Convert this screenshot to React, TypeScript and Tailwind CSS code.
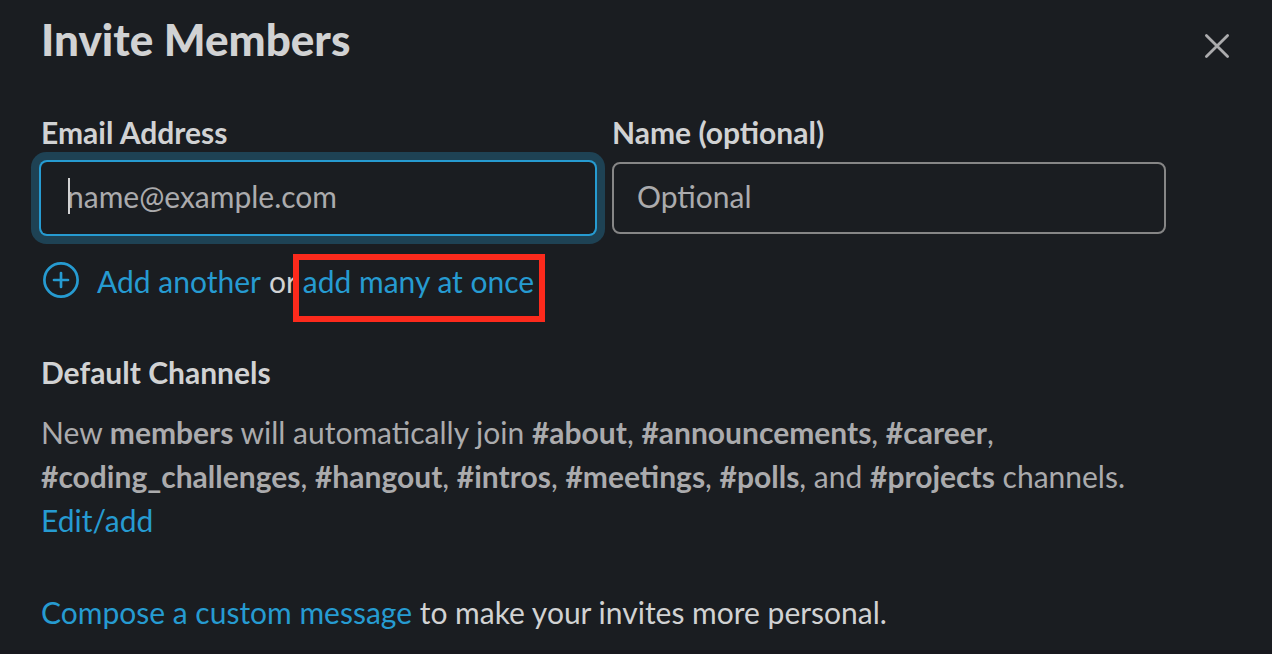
const channels = ["#about", "#announcements", "#career", "#coding_challenges", "#hangout", "#intros", "#meetings", "#polls"];

export default function App() {
  return (
    <main className="min-h-screen border-b-4 border-[#17181d] bg-[#1a1d21] px-[41px] font-['Lato',sans-serif] text-[30px] leading-[44px] text-[#d1d2d3]">
      <header className="flex items-start justify-between pt-[11px]">
        <h1 className="text-[44px] leading-[56px] font-black">Invite Members</h1>
        <button type="button" aria-label="Close" className="mt-[21px] text-[#ababad]">
          <svg className="size-7" viewBox="0 0 28 28" fill="none" stroke="currentColor" strokeWidth="2.8" strokeLinecap="round">
            <path d="M3.4 3.4 24.6 24.6M24.6 3.4 3.4 24.6" />
          </svg>
        </button>
      </header>

      <form className="mt-[45px] mr-[65px] grid grid-cols-2 gap-x-[17px]">
        <div>
          <label htmlFor="email" className="block leading-10 font-bold">Email Address</label>
          <div className="relative mt-[10px]">
            <input
              id="email"
              type="email"
              placeholder="name@example.com"
              className="block h-[72px] w-full rounded-md bg-transparent px-[26px] pb-1 shadow-[0_0_0_2px_#269bd1,0_0_0_10px_#1e4254] outline-none placeholder:text-[#ababad]"
            />
            <span aria-hidden="true" className="absolute top-4 left-[27px] h-9 w-0.5 bg-[#d1d2d3]" />
          </div>
        </div>
        <div>
          <label htmlFor="name" className="block leading-10 font-bold">Name (optional)</label>
          <input
            id="name"
            type="text"
            placeholder="Optional"
            className="mt-[10px] block h-[72px] w-full rounded-lg border-2 border-[#868686] bg-transparent px-[23px] pb-1 outline-none placeholder:text-[#ababad]"
          />
        </div>
      </form>

      <div className="mt-5 ml-0.5 flex items-start leading-[42px]">
        <button type="button" className="mt-1.5 flex items-start gap-[18px] text-[#269bd1]">
          <svg className="mt-0.5 size-9" viewBox="0 0 36 36" fill="none" stroke="currentColor" strokeWidth="2.7" strokeLinecap="round">
            <circle cx="18" cy="18" r="16.6" />
            <path d="M18 11v14M11 18h14" />
          </svg>
          Add another
        </button>
        <span className="mt-1.5 ml-2">or</span>
        <button type="button" className="-ml-1 border-[6px] border-[#fc2a1c] pr-[5px] pb-[14px] pl-1 text-[#269bd1]">add many at once</button>
      </div>

      <section className="mt-[30px]">
        <h2 className="leading-10 font-bold">Default Channels</h2>
        <p className="mt-[18px] text-[#ababad]">
          New <b>members</b> will automatically join{" "}
          {channels.map((channel) => (
            <span key={channel}><b>{channel}</b>, </span>
          ))}
          and <b>#projects</b> channels.
        </p>
        <a href="#edit" className="text-[#269bd1]">Edit/add</a>
      </section>

      <p className="mt-12">
        <a href="#compose" className="text-[#269bd1]">Compose a custom message</a> to make your invites more personal.
      </p>
    </main>
  );
}
